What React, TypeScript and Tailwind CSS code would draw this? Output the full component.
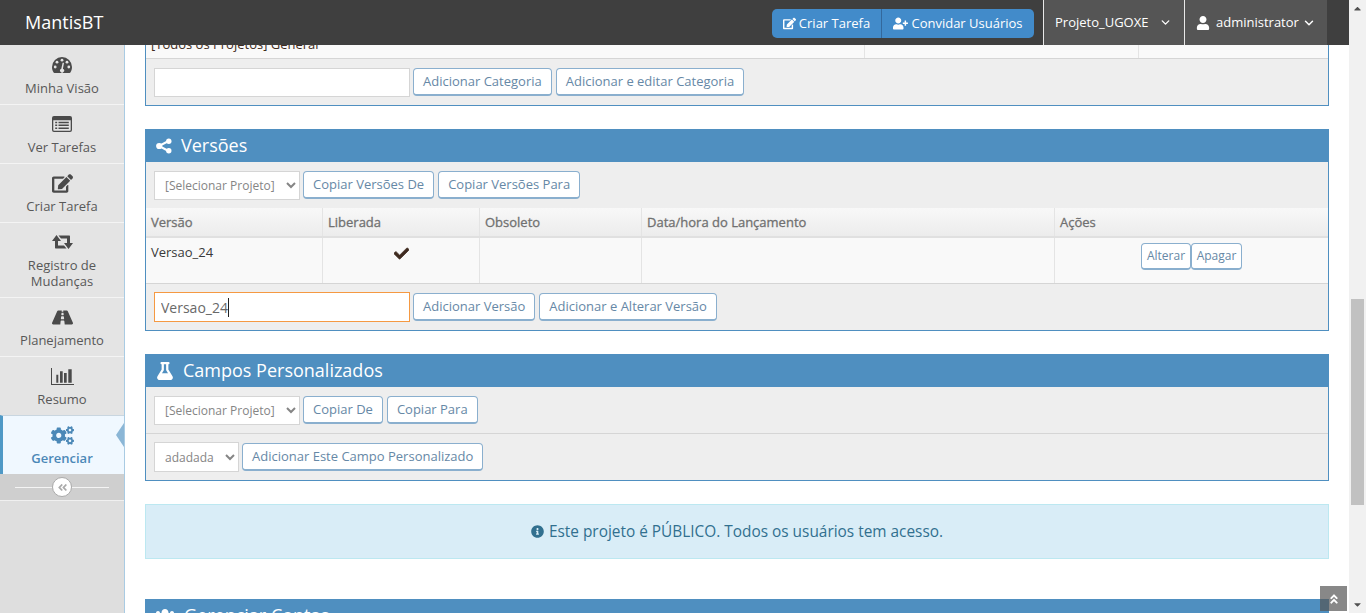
import React from 'react';
import {
  FaAngleDoubleLeft,
  FaAngleDoubleUp,
  FaCaretDown,
  FaCaretUp,
  FaCheck,
  FaCogs,
  FaEdit,
  FaFlask,
  FaInfoCircle,
  FaRoad,
  FaUser,
  FaUserPlus,
  FaUsers,
} from 'react-icons/fa';
import { ChevronDown } from 'lucide-react';

const GaugeIcon = () => (
  <svg width="20" height="16" viewBox="0 0 20 16" fill="currentColor">
    <path d="M10 0a10 10 0 0 1 10 10c0 2.2-.6 4-1.6 5.5a1 1 0 0 1-.9.5H2.500a1 1 0 0 1-.9-.5C.6 14 0 12.200 0 10A10 10 0 0 1 10 0z" />
    <g fill="#e4e4e4">
      <circle cx="3.200" cy="10" r="1.400" />
      <circle cx="5" cy="5.200" r="1.400" />
      <circle cx="10" cy="3.200" r="1.400" />
      <circle cx="15" cy="5.200" r="1.400" />
      <circle cx="16.800" cy="10" r="1.400" />
      <path d="M11.900 6.500l-1 5.300a2 2 0 1 1-1.600 0l1.200-5.600a.7.7 0 0 1 1.400.3z" />
    </g>
  </svg>
);

const ListAltIcon = () => (
  <svg width="20" height="16" viewBox="0 0 20 16" fill="currentColor">
    <path d="M2 0h16a2 2 0 0 1 2 2v12a2 2 0 0 1-2 2H2a2 2 0 0 1-2-2V2a2 2 0 0 1 2-2zm-.7 4.200V14c0 .4.3.7.7.7h16c.4 0 .7-.3.7-.7V4.200z" />
    <path d="M3.200 5.800h2v1.500h-2zm3.300 0h10.300v1.500H6.500zM3.200 8.600h2v1.500h-2zm3.300 0h10.300v1.500H6.500zM3.200 11.400h2v1.500h-2zm3.300 0h10.300v1.500H6.500z" />
  </svg>
);

const RetweetIcon = () => (
  <svg width="21" height="14" viewBox="0 0 21 14" fill="currentColor">
    <path d="M0 6L4.500 0 9 6H6v4.500h6l2.500 3H4c-.7 0-1-.3-1-1V6z" />
    <path d="M21 8l-4.500 6L12 8h3V3.500H9L6.500.5H17c.7 0 1 .3 1 1V8z" />
  </svg>
);

const BarsIcon = () => (
  <svg width="23" height="17" viewBox="0 0 23 17" fill="currentColor">
    <path d="M0 0h1v16h22v1H0z" />
    <path d="M5.300 6.700h2v8h-2zM9 3.300h2.700v11.400H9zM13 5h2.700v9.700H13zM17.300 1.300h3.400v13.400h-3.400z" />
  </svg>
);

const ShareIcon = () => (
  <svg width="16" height="16" viewBox="0 0 16 16" fill="currentColor" stroke="currentColor">
    <path d="M12.500 3L3 8l9.500 5" fill="none" strokeWidth="2" />
    <circle cx="12.800" cy="3.200" r="2.700" stroke="none" />
    <circle cx="3.200" cy="8" r="3.100" stroke="none" />
    <circle cx="12.800" cy="12.800" r="2.700" stroke="none" />
  </svg>
);

const menu = [
  { label: 'Minha Visão', icon: <GaugeIcon />, h: 'h-[59px]' },
  { label: 'Ver Tarefas', icon: <ListAltIcon />, h: 'h-[59px]' },
  { label: 'Criar Tarefa', icon: <FaEdit size={21} />, h: 'h-[59px]' },
  { label: 'Registro de Mudanças', icon: <RetweetIcon />, h: 'h-[75px]' },
  { label: 'Planejamento', icon: <FaRoad size={21} />, h: 'h-[59px]' },
  { label: 'Resumo', icon: <BarsIcon />, h: 'h-[59px]' },
];

const Btn = ({ children }: { children: React.ReactNode }) => (
  <button className="h-[28px] px-[9px] bg-white border border-b-2 border-[#8aafce] rounded-[4px] text-[13px] text-[#6688a6]">
    {children}
  </button>
);

const SmallBtn = ({ children, className }: { children: React.ReactNode; className: string }) => (
  <button className={`h-[27px] bg-white border border-b-2 border-[#8aafce] rounded-[4px] text-[12px] text-[#6688a6] ${className}`}>
    {children}
  </button>
);

const Select = ({ value, className }: { value: string; className: string }) => (
  <select
    defaultValue={value}
    className={`bg-white border border-[#d5d5d5] pl-[6px] text-[12px] text-[#858585] outline-none ${className}`}
  >
    <option>{value}</option>
  </select>
);

const PanelHead = ({ icon, title }: { icon: React.ReactNode; title: string }) => (
  <div className="h-[33px] bg-[#4f8fc0] text-white flex items-center gap-[9px] pl-[10px] text-[18px]">
    {icon}
    <span>{title}</span>
  </div>
);

const Th = ({ className, children }: { className: string; children?: React.ReactNode }) => (
  <div className={`pl-[5px] pt-[1px] flex items-center border-r border-[#e4e4e4] ${className}`}>{children}</div>
);

export default function App() {
  return (
    <div className="relative h-[613px] w-[1366px] flex overflow-hidden font-['Open_Sans',sans-serif] text-[13px] text-[#393939] bg-white">
      <div className="flex-1 min-w-0 flex flex-col">
        {/* navbar */}
        <div className="h-[45px] shrink-0 bg-[#3f3f3f] flex items-stretch text-white">
          <div className="pl-[25px] text-[18px] leading-[45px]">MantisBT</div>
          <div className="ml-auto self-start mt-[9px] h-[29px] flex rounded-[5px] overflow-hidden bg-[#428bca] text-[13px] mr-[9px]">
            <div className="w-[110px] flex items-center justify-center gap-[3px] border-r border-[#33689c]">
              <FaEdit size={13} /> Criar Tarefa
            </div>
            <div className="w-[152px] flex items-center justify-center gap-[3px]">
              <FaUserPlus size={15} /> Convidar Usuários
            </div>
          </div>
          <div className="w-[141px] bg-[#555] border-l border-[#e8e8e8] flex items-center pl-[11px]">
            Projeto_UGOXE
            <ChevronDown size={13} strokeWidth={2.5} className="ml-[11px]" />
          </div>
          <div className="w-[143px] bg-[#555] border-l border-[#e8e8e8] flex items-center pl-[11px]">
            <FaUser size={14} className="mr-[6px]" />
            administrator
            <ChevronDown size={14} strokeWidth={2.5} className="ml-[3px]" />
          </div>
          <div className="w-[22px]" />
        </div>

        <div className="flex-1 min-h-0 flex">
          {/* sidebar */}
          <div className="w-[125px] shrink-0 bg-[#dedede] border-r border-[#a9cbe3] flex flex-col">
            <div className="h-px shrink-0 bg-[#e4e4e4]" />
            {menu.map((m) => (
              <div
                key={m.label}
                className={`${m.h} bg-[#e4e4e4] border-b border-[#f4f4f4] flex flex-col items-center pt-[7px] text-[#585858] text-center leading-[16px]`}
              >
                <div className="h-[24px] flex items-center text-[#4a4a4a]">{m.icon}</div>
                <div className="mt-[3px] px-[10px]">{m.label}</div>
              </div>
            ))}
            <div className="relative h-[59px] -mt-px bg-[#f0f8ff] border-t border-[#c9d6e0] border-l-[3px] border-l-[#4f99c6] flex flex-col items-center pt-[7px] pr-[3px] text-[#4b88b7] font-semibold leading-[16px]">
              <div className="h-[24px] flex items-center">
                <FaCogs size={23} />
              </div>
              <div className="mt-[3px]">Gerenciar</div>
              <div className="absolute right-0 top-[7px] w-0 h-0 border-y-[12px] border-y-transparent border-r-[8px] border-r-[#8bb6d6]" />
            </div>
            <div className="h-[27px] bg-[#cfcfcf] border-b border-[#f0f0f0] flex items-center px-[15px]">
              <div className="flex-1 h-px bg-[#f4f4f4]" />
              <div className="w-[20px] h-[20px] rounded-full bg-white border border-[#aaa] flex items-center justify-center text-[#aaa]">
                <FaAngleDoubleLeft size={11} />
              </div>
              <div className="flex-1 h-px bg-[#f4f4f4]" />
            </div>
          </div>

          {/* content */}
          <div className="flex-1 min-w-0 pl-[20px] pr-[20px] overflow-hidden">
            <div className="border border-t-0 border-[#4f8fc0] bg-[#eee]">
              <div className="h-[14px] bg-[#f9f9f9] border-b border-[#d5d5d5] flex overflow-hidden">
                <div className="w-[719px] border-r border-[#e4e4e4] pl-[5px] leading-[13px] -mt-[7px] text-[#3f2b20]">
                  [Todos os Projetos] General
                </div>
                <div className="w-[274px] border-r border-[#e4e4e4]" />
              </div>
              <div className="h-[46px] flex items-center pl-[8px] gap-[3px]">
                <input className="w-[256px] h-[29px] bg-white border border-[#d5d5d5] outline-none" />
                <div className="flex gap-[4px]">
                  <Btn>Adicionar Categoria</Btn>
                  <Btn>Adicionar e editar Categoria</Btn>
                </div>
              </div>
            </div>

            <div className="mt-[23px] border border-[#4f8fc0] border-t-0 bg-[#eee]">
              <PanelHead icon={<ShareIcon />} title="Versões" />
              <div className="h-[46px] flex items-center pl-[8px] gap-[3px]">
                <Select value="[Selecionar Projeto]" className="w-[146px] h-[29px]" />
                <div className="flex gap-[4px]">
                  <Btn>Copiar Versões De</Btn>
                  <Btn>Copiar Versões Para</Btn>
                </div>
              </div>
              <div className="h-[30px] flex font-medium [-webkit-text-stroke:0.3px_#707070] text-[#707070] bg-gradient-to-b from-[#f8f8f8] to-[#ececec] border-b-2 border-[#e0e0e0]">
                <Th className="w-[177px]">Versão</Th>
                <Th className="w-[157px]">Liberada</Th>
                <Th className="w-[162px]">Obsoleto</Th>
                <Th className="w-[413px]">Data/hora do Lançamento</Th>
                <div className="pl-[5px] pt-[1px] flex items-center">Ações</div>
              </div>
              <div className="h-[46px] flex bg-[#f9f9f9] border-b border-[#d5d5d5]">
                <div className="w-[177px] pl-[5px] pt-[5px] border-r border-[#e4e4e4]">Versao_24</div>
                <div className="w-[157px] pt-[8px] flex justify-center border-r border-[#e4e4e4]">
                  <FaCheck size={15} stroke="currentColor" strokeWidth={25} className="text-[#3f2b20]" />
                </div>
                <div className="w-[162px] border-r border-[#e4e4e4]" />
                <div className="w-[413px] border-r border-[#e4e4e4]" />
                <div className="flex-1 flex justify-end pt-[5px] pr-[86px]">
                  <div className="flex h-[27px]">
                    <SmallBtn className="w-[50px]">Alterar</SmallBtn>
                    <SmallBtn className="w-[51px]">Apagar</SmallBtn>
                  </div>
                </div>
              </div>
              <div className="h-[46px] flex items-center pl-[8px] gap-[3px]">
                <div className="relative">
                  <input
                    defaultValue="Versao_24"
                    className="block w-[256px] h-[30px] bg-white border border-[#f59942] pl-[6px] text-[14px] text-[#696969] outline-none"
                  />
                  {/* text caret */}
                  <div className="absolute left-[74px] top-[6px] w-px h-[19px] bg-[#222]" />
                </div>
                <div className="flex gap-[4px]">
                  <Btn>Adicionar Versão</Btn>
                  <Btn>Adicionar e Alterar Versão</Btn>
                </div>
              </div>
            </div>

            <div className="mt-[23px] border border-[#4f8fc0] border-t-0 bg-[#eee]">
              <PanelHead icon={<FaFlask size={18} />} title="Campos Personalizados" />
              <div className="h-[47px] flex items-center pl-[8px] gap-[3px] border-b border-[#d5d5d5]">
                <Select value="[Selecionar Projeto]" className="w-[146px] h-[29px]" />
                <div className="flex gap-[4px]">
                  <Btn>Copiar De</Btn>
                  <Btn>Copiar Para</Btn>
                </div>
              </div>
              <div className="h-[46px] pt-[8px] pl-[8px]">
                <div className="h-[30px] flex items-center gap-[3px]">
                  <Select value="adadada" className="w-[85px] h-[30px]" />
                  <Btn>Adicionar Este Campo Personalizado</Btn>
                </div>
              </div>
            </div>

            <div className="mt-[23px] h-[55px] bg-[#d9edf7] border border-[#bce8f1] flex items-center justify-center gap-[5px] text-[15.4px] text-[#31708f]">
              <FaInfoCircle size={13} />
              Este projeto é PÚBLICO. Todos os usuários tem acesso.
            </div>

            <div className="mt-[40px]">
              <PanelHead icon={<FaUsers size={20} />} title="Gerenciar Contas" />
            </div>
          </div>
        </div>
      </div>

      {/* scrollbar */}
      <div className="w-[17px] shrink-0 bg-[#f1f1f1] flex flex-col items-center text-[#505050]">
        <div className="h-[17px] flex items-center justify-center">
          <FaCaretUp size={11} />
        </div>
        <div className="mt-[282px] w-[13px] h-[206px] bg-[#c1c1c1]" />
        <div className="mt-auto h-[17px] flex items-center justify-center">
          <FaCaretDown size={11} />
        </div>
      </div>

      {/* back to top */}
      <div className="absolute left-[1320px] top-[586px] w-[27px] h-[25px] bg-[#555]/70 flex items-center justify-center text-white">
        <FaAngleDoubleUp size={12} />
      </div>
    </div>
  );
}
